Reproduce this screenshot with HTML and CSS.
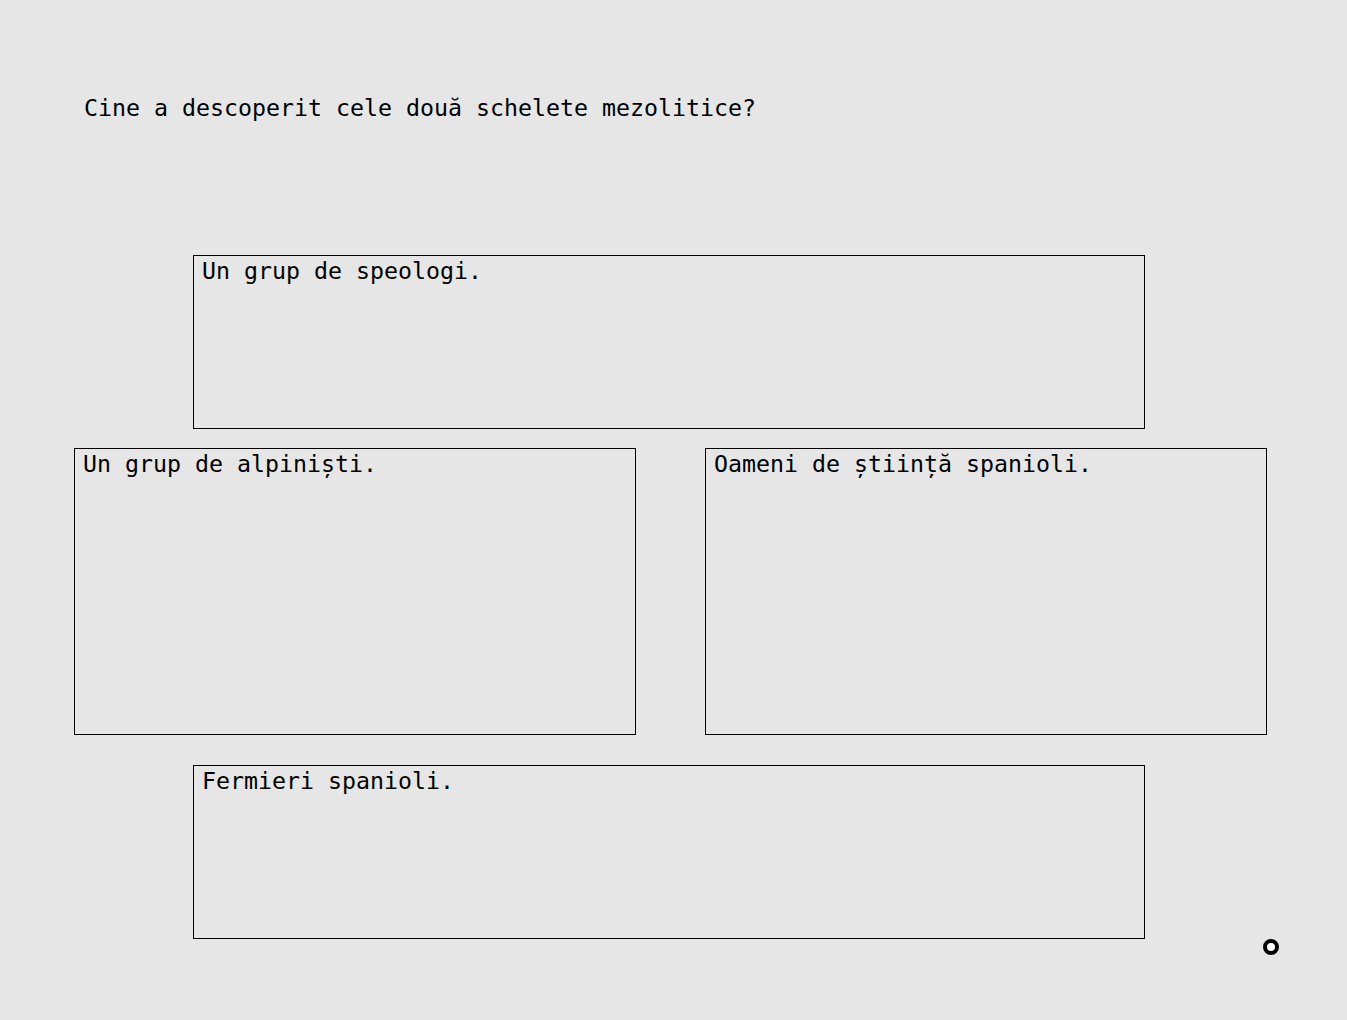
FILE: index.html
```html
<!DOCTYPE html>
<html lang="ro">
<head>
<meta charset="utf-8">
<title>Quiz</title>
<link rel="stylesheet" href="styles.css">
</head>
<body>
<main class="page">
  <p class="question">Cine a descoperit cele două schelete mezolitice?</p>
  <div class="answers">
    <div class="answer wide">Un grup de speologi.</div>
    <div class="row">
      <div class="answer tall">Un grup de alpiniști.</div>
      <div class="answer tall">Oameni de știință spanioli.</div>
    </div>
    <div class="answer wide last">Fermieri spanioli.</div>
  </div>
</main>
<span class="dot" aria-hidden="true"></span>
</body>
</html>
```
FILE: styles.css
```css
html, body {
  margin: 0;
  padding: 0;
  background: #e6e6e6;
}
body {
  font-family: "DejaVu Sans Mono", "Liberation Mono", monospace;
  font-size: 23.25px;
  color: #000;
  min-height: 1020px;
  position: relative;
}
.page {
  padding: 94px 0 0 74px;
}
.question {
  margin: 0 0 0 10px;
  line-height: 27px;
}
.answers {
  margin-top: 134px;
  width: 1193px;
  display: flex;
  flex-direction: column;
}
.answer {
  box-sizing: border-box;
  border: 1px solid #000;
  padding: 1px 8px;
  line-height: 27px;
}
.wide {
  margin-left: 119px;
  width: 952px;
  height: 174px;
}
.row {
  display: grid;
  grid-template-columns: 562px 562px;
  column-gap: 69px;
  margin-top: 19px;
}
.tall {
  height: 287px;
}
.last {
  margin-top: 30px;
}
.dot {
  position: absolute;
  left: 1263px;
  top: 939px;
  width: 16px;
  height: 16px;
  box-sizing: border-box;
  border: 4px solid #000;
  border-radius: 50%;
  background: #fff;
}
```
